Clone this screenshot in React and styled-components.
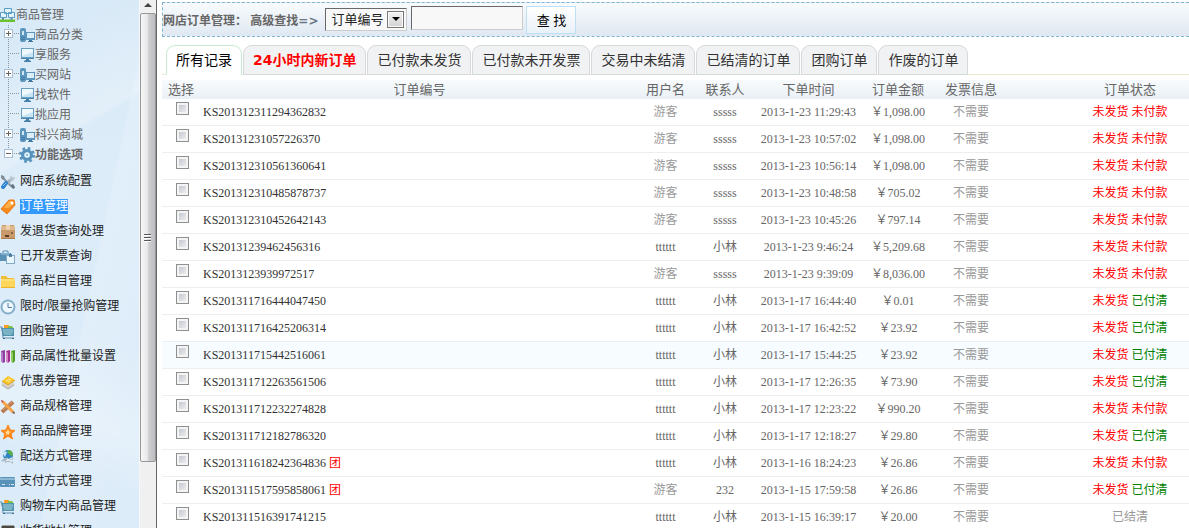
import { useState } from "react";
import styled, { createGlobalStyle } from "styled-components";

const colors = {
  text: "#666",
  dark: "#333",
  muted: "#999",
  red: "#f00",
  green: "#008000",
};

const GlobalStyle = createGlobalStyle`
  * {
    box-sizing: border-box;
  }
  body {
    margin: 0;
    background: #fff;
    color: ${colors.text};
    font-family: "Liberation Sans", "Noto Sans CJK SC", sans-serif;
    font-size: 12px;
  }
`;

const Shell = styled.div`
  display: flex;
  height: 100vh;
  overflow: hidden;
`;

/* ---------- sidebar ---------- */

const Sidebar = styled.aside`
  flex: none;
  width: 139px;
  padding-top: 5px;
  overflow: hidden;
  background:
    linear-gradient(150deg, rgba(255, 255, 255, 0) 10%, rgba(255, 255, 255, 0.22) 28%, rgba(255, 255, 255, 0) 29%),
    linear-gradient(102deg, rgba(255, 255, 255, 0) 60%, rgba(255, 255, 255, 0.16) 61%, rgba(255, 255, 255, 0.04) 90%),
    linear-gradient(20deg, rgba(255, 255, 255, 0) 14%, rgba(255, 255, 255, 0.26) 24%, rgba(255, 255, 255, 0) 40%),
    linear-gradient(#d8e9f7, #dcecf9 30%, #dbebf9);
`;

const TreeRow = styled.div`
  display: flex;
  align-items: center;
  height: 20px;
  line-height: 20px;
  white-space: nowrap;
  font-weight: ${(props) => (props.$bold ? "bold" : "normal")};
  svg {
    flex: none;
  }
`;

const TreeLink = styled.a`
  color: ${colors.text};
  text-decoration: none;
`;

const Menu = styled.ul`
  list-style: none;
  margin: 4px 0 0;
  padding: 0;
`;

const MenuItem = styled.li`
  display: flex;
  align-items: center;
  column-gap: 4px;
  height: 25px;
  white-space: nowrap;
  svg {
    flex: none;
  }
`;

const MenuLink = styled.a`
  line-height: 15px;
  color: ${(props) => (props.$active ? "#fff" : "#222")};
  background: ${(props) => (props.$active ? "#3399ff" : "transparent")};
  text-decoration: none;
`;

const Scrollbar = styled.div`
  flex: none;
  display: flex;
  flex-direction: column;
  width: 18px;
  border-left: 1px solid #f4f8fb;
  border-right: 1px solid #666;
  background: #f0f0f0;
`;

const ScrollUp = styled.button`
  display: flex;
  justify-content: center;
  height: 13px;
  padding: 3px 0 0;
  border: 0;
  background: #f0f0f0;
`;

const ScrollThumb = styled.div`
  display: flex;
  align-items: center;
  justify-content: center;
  height: 85%;
  border: 1px solid #979797;
  border-radius: 2px;
  background: linear-gradient(90deg, #f6f6f6, #e9e9eb 45%, #cfcfd2 55%, #bdbdc1);
`;

/* ---------- main ---------- */

const Main = styled.main`
  flex: 1;
  min-width: 0;
  padding: 2px 0 0 5px;
`;

const SearchBar = styled.form`
  display: flex;
  align-items: flex-start;
  height: 35px;
  padding-top: 3px;
  border: 1px dashed #7db5cd;
  border-right: 0;
  background: linear-gradient(#f8fbfd, #dfe8f2);
  white-space: nowrap;
`;

const SearchTitle = styled.label`
  margin-right: 7px;
  font-weight: bold;
  line-height: 30px;
`;

const Arrow = styled.span`
  font-family: "DejaVu Sans", sans-serif;
  color: #6b7886;
`;

const SelectBox = styled.span`
  position: relative;
  margin: 2px 4px 0 0;
`;

const Select = styled.select`
  appearance: none;
  display: block;
  width: 82px;
  height: 23px;
  padding: 0 0 0 5px;
  border: 1px solid #696969;
  border-right-color: #ccc;
  border-bottom-color: #ccc;
  border-radius: 0;
  background: #f8f8f8;
  color: #222;
  font: 13px "Liberation Sans", "Noto Sans CJK SC", sans-serif;
`;

const SelectArrow = styled.span`
  position: absolute;
  top: 3px;
  right: 3px;
  display: flex;
  align-items: center;
  justify-content: center;
  width: 17px;
  height: 17px;
  border: 1px solid #777;
  background: linear-gradient(#f2f2f2, #d2d2d2);
  box-shadow: inset 0 0 0 1px #fafafa;
  pointer-events: none;
`;

const SearchInput = styled.input`
  width: 112px;
  height: 24px;
  margin-right: 3px;
  border: 1px solid #696969;
  border-right-color: #ccc;
  border-bottom-color: #ccc;
  background: #f8f8f8;
`;

const SearchButton = styled.button`
  width: 50px;
  height: 28px;
  padding: 0 0 2px;
  border: 1px solid #bfdff5;
  background: linear-gradient(#fff, #e9f1f9);
  color: #000;
  font: 13px "Liberation Sans", "Noto Sans CJK SC", sans-serif;
`;

const Tabs = styled.nav`
  display: flex;
  column-gap: 1px;
  margin-top: 8px;
  padding-left: 4px;
  border-bottom: 1px solid #ece8d2;
`;

const Tab = styled.button`
  height: 30px;
  margin-bottom: -1px;
  padding: 0 9px;
  border: 1px solid ${(props) => (props.$active ? "#c5ecd2" : "#d5dad8")};
  border-bottom-color: ${(props) => (props.$active ? "#fff" : "#d5dad8")};
  border-radius: 9px 9px 0 0;
  background: ${(props) => (props.$active ? "#fff" : "#f1f2f4")};
  color: ${(props) => (props.$hot ? colors.red : props.$active ? "#000" : "#333")};
  font-family: "DejaVu Sans", "Noto Sans CJK SC", sans-serif;
  font-size: 14px;
  font-weight: ${(props) => (props.$hot ? "bold" : "normal")};
  line-height: 28px;
  white-space: nowrap;
`;

const Table = styled.table`
  width: 100%;
  margin-top: 5px;
  border-collapse: separate;
  border-spacing: 0;
  table-layout: fixed;
  font-family: "Liberation Serif", "Noto Sans CJK SC", serif;
`;

const Th = styled.th`
  width: ${(props) => props.$width || "auto"};
  height: 19px;
  padding: 0 0 0 ${(props) => props.$indent || "0"};
  background: linear-gradient(#f8fbfd, #e9f0f6);
  font-size: 13px;
  font-weight: normal;
  line-height: 19px;
  white-space: nowrap;
`;

const Row = styled.tr`
  background: ${(props) => (props.$hover ? "#f6fcff" : "#fff")};
`;

const Td = styled.td`
  height: 27px;
  padding: 0 0 0 ${(props) => props.$indent || "0"};
  border-bottom: 1px solid #eee;
  color: ${(props) => props.$color || colors.text};
  line-height: 26px;
  text-align: ${(props) => props.$align || "center"};
  white-space: nowrap;
`;

const Check = styled.input`
  appearance: none;
  display: block;
  width: 13px;
  height: 13px;
  margin: 0 auto 7px 14px;
  border: 1px solid #8e8f8f;
  background: linear-gradient(135deg, #b9bfc9, #f6f6f6);
  box-shadow: inset 0 0 0 2px #f4f4f4;
  &:checked {
    background: #4b6fa5;
  }
`;

const Mark = styled.span`
  color: ${(props) => props.$color};
`;

/* ---------- icons ---------- */

function Icon({ children }) {
  return (
    <svg width="16" height="16" viewBox="0 0 16 16" fill="none" aria-hidden="true">
      {children}
    </svg>
  );
}

const RootIcon = () => (
  <Icon>
    <path d="M4.500 1.500h7v5h-7zM.500 5.500h6v5h-6zM8.500 5.500h6v5h-6z" fill="#e2f3fc" stroke="#5a9cc4" />
    <path d="M3 11v2M11.500 11v2" stroke="#4f8db5" strokeWidth="2" />
    <path d="M0 13l1-1 1 1 1-1 2 1 1-1 2 1 1-1 2 1 1-1 1 1 2-1v3H0z" fill="#6cc12f" />
  </Icon>
);

const MonitorIcon = () => (
  <Icon>
    <path d="M2 1h13v10H2z" fill="#6a9fc3" />
    <path d="M3 2h11v8H3z" fill="#c9e4f3" />
    <path d="M3 2h11v3L3 9z" fill="#eef8fd" />
    <path d="M2 11h13v1H2z" fill="#4d88b0" />
    <path d="M7 12h3v1l2 1v1H5v-1l2-1z" fill="#4480aa" />
  </Icon>
);

const DeviceIcon = () => (
  <Icon>
    <rect x="1" y="1" width="6" height="14" rx="2" fill="#5c95bd" />
    <path d="M3 4h2v4H3z" fill="#cfe6f4" />
    <path d="M2 10h4v1H2zM2 12h4v1H2z" fill="#3f7ba6" />
    <path d="M7 5h9v8H7z" fill="#5c95bd" />
    <path d="M8 6h7v5H8z" fill="#d9eef9" />
    <path d="M10 13h3v1h1v1H9v-1h1z" fill="#3f79a3" />
  </Icon>
);

const GearIcon = () => (
  <Icon>
    <circle cx="8" cy="8" r="6.500" stroke="#5793bd" strokeWidth="3" strokeDasharray="2.550 2.550" />
    <circle cx="8" cy="8" r="4.500" fill="#a8cde5" stroke="#5793bd" strokeWidth="3" />
    <circle cx="8" cy="8" r="2.500" fill="#eaf5fc" />
    <circle cx="8" cy="8" r="1" fill="#6ba4ca" />
  </Icon>
);

const ToolsIcon = () => (
  <Icon>
    <path d="M3 4l9 9" stroke="#8896a3" strokeWidth="2" />
    <path d="M1 1l3 1 1 3-2 1-2-2z" fill="#7e8d99" />
    <path d="M11 11l2-1 2 3-1 2-2-1z" fill="#5f7281" />
    <path d="M13 4L7 9" stroke="#a4b2bd" strokeWidth="3" />
    <path d="M10 3l2-2-.500 3L15 3l-1 3-4 1z" fill="#bac7d0" />
    <path d="M6 9l-3 4" stroke="#2c82cf" strokeWidth="4" strokeLinecap="round" />
    <path d="M6 9l-3 3" stroke="#8cc9f5" />
  </Icon>
);

const TagIcon = () => (
  <Icon>
    <path d="M9 1l5 0 1 5-8 9-6-5z" fill="#f68a1e" stroke="#ee7d18" />
    <path d="M9 2l4 0 1 3-5 4-5 0z" fill="#ffae48" />
    <circle cx="12" cy="4" r="1.500" fill="#fff" />
  </Icon>
);

const BoxIcon = () => (
  <Icon>
    <path d="M2 1h12l1 5v9H1V6z" fill="#c99a6c" />
    <path d="M2 2h12l1 4H1z" fill="#dfb88c" />
    <path d="M6 1h4v5H6z" fill="#ecd3ae" />
    <path d="M5 12h4" stroke="#5d3c20" strokeWidth="2" />
    <path d="M11 8h2v2h-2z" fill="#8a6242" />
    <path d="M1 14.500h14" stroke="#a87c50" />
  </Icon>
);

const InvoiceIcon = () => (
  <Icon>
    <path d="M0 4h11v8H0z" fill="#5a90b6" />
    <path d="M1 4h9v2H1z" fill="#7fb0cf" />
    <path d="M3 4V2h5v2" stroke="#5b8fb3" />
    <path d="M6 6h9v9H6z" fill="#7fabc8" />
    <path d="M7 7h7v7H7z" fill="#eaf6fc" />
    <path d="M9 5h3v3H9z" fill="#4b7fa5" />
  </Icon>
);

const FolderIcon = () => (
  <Icon>
    <path d="M1 2h5l2 2h6v3H1z" fill="#f0bd3a" />
    <path d="M1 5h13l1 1v8H1z" fill="#fdd65a" />
    <path d="M1 6h13" stroke="#ffe891" />
    <path d="M1 13.500h14" stroke="#eeb32c" />
  </Icon>
);

const ClockIcon = () => (
  <Icon>
    <circle cx="8" cy="8" r="6.500" fill="#eef8fd" stroke="#86b0ca" strokeWidth="2" />
    <path d="M8 4v4.500h4" stroke="#55809f" />
  </Icon>
);

const CartIcon = () => (
  <Icon>
    <path d="M4 1h5v4H4z" fill="#ff9c21" />
    <path d="M8 2h4l2 3H8z" fill="#7fc241" />
    <path d="M1 4h13v8H3z" fill="#4f94ab" />
    <path d="M3 6h10M3 8h10M4 10h8" stroke="#a5d2df" />
    <path d="M0 3h2l1 11h11" stroke="#5a8fae" />
    <path d="M3 14h2v1H3zM12 14h2v1h-2z" fill="#3d6782" />
  </Icon>
);

const BindersIcon = () => (
  <Icon>
    <path d="M1 2l4-1v12l-2 1-2-2z" fill="#8e3fa4" />
    <path d="M1 2l2 2v10l-2-2z" fill="#b57cc6" />
    <path d="M6 2l4-1v11l-2 2-2-2z" fill="#a62a90" />
    <path d="M6 2l2 2v10l-2-2z" fill="#d787c4" />
    <path d="M11 2l4-1v11l-2 2-2-2z" fill="#4d9d27" />
    <path d="M11 2l2 2v10l-2-2z" fill="#94cc62" />
  </Icon>
);

const CouponIcon = () => (
  <Icon>
    <path d="M2 7v4l6 4 6-4V7l-6 4z" fill="#d4d2ca" />
    <path d="M2 11l6 4 6-4" stroke="#a9a69c" />
    <path d="M2 7l6-5 7 4-7 5z" fill="#f9c72c" />
    <path d="M2 7l6 4 7-5" stroke="#dd9f18" />
    <path d="M6 6l4 2M8 5l3 1" stroke="#fff0a8" />
  </Icon>
);

const RulerIcon = () => (
  <Icon>
    <path d="M2 13L13 3" stroke="#b9794e" strokeWidth="4" />
    <path d="M3 11L12 3" stroke="#d3a077" />
    <path d="M3 3l10 10" stroke="#f3a343" strokeWidth="3" />
    <path d="M1 1l3 1-2 2z" fill="#c6403b" />
    <path d="M12 14l3 1-1-3z" fill="#6b4a34" />
  </Icon>
);

const StarIcon = () => (
  <Icon>
    <path d="M8 1l2 5 5 .500-4 3.500 1.500 5L8 12l-4.500 3L5 10 1 6.500 6 6z" fill="#ff8c14" stroke="#f98015" />
    <path d="M8 5l1 2.500 2 .500-2 1v2L8 10l-2 1 .500-2L5 8l2-.500z" fill="#ffe0a0" />
  </Icon>
);

const GlobeIcon = () => (
  <Icon>
    <circle cx="8" cy="6" r="5" fill="#2f86c2" />
    <path d="M8 1c4 0 5 3 5 5-2 2-2 0-4-1s-2-2-1-4z" fill="#5fb04b" />
    <path d="M3 5c0-2 2-3 4-2L5 8z" fill="#cdeaf8" />
    <path d="M5 13l8-4M6 9l7 5M2 12l4-2" stroke="#a9bbc6" strokeWidth="2" />
    <path d="M6 12l6-3M7 10l5 3" stroke="#f0f5f8" />
  </Icon>
);

const CardIcon = () => (
  <Icon>
    <rect x="0" y="3" width="15" height="10" rx="1" fill="#5892b8" />
    <path d="M0 4h15v2H0z" fill="#8db9d4" />
    <path d="M2 10.500h3M9 10.500h1M11 10.500h3" stroke="#d3e8f4" />
  </Icon>
);

const AddressIcon = () => (
  <Icon>
    <path d="M2 2h12v12H2z" fill="#d99a4e" stroke="#5c5246" />
    <path d="M2 2h12v3H2z" fill="#4b4741" />
    <path d="M4 8h8M4 11h6" stroke="#fff1d8" />
  </Icon>
);

// dotted connector in front of a tree node, with an optional +/- box
function Branch({ toggle, last }) {
  return (
    <svg width="19" height="20" viewBox="0 0 19 20" fill="none" aria-hidden="true">
      <path d={last ? "M8.500 0v8" : "M8.500 0v20"} stroke="#8e969b" strokeDasharray="1 1" />
      <path d="M10 8.500h9" stroke="#8e969b" strokeDasharray="1 1" />
      {toggle && (
        <>
          <rect x="4.500" y="4.500" width="8" height="8" fill="#fff" stroke="#a9bfd6" />
          <path d={toggle === "plus" ? "M6 8.500h5M8.500 6v5" : "M6 8.500h5"} stroke="#666" />
        </>
      )}
    </svg>
  );
}

/* ---------- data ---------- */

const tree = [
  { label: "商品分类", icon: DeviceIcon, toggle: "plus" },
  { label: "享服务", icon: MonitorIcon },
  { label: "买网站", icon: DeviceIcon, toggle: "plus" },
  { label: "找软件", icon: MonitorIcon },
  { label: "挑应用", icon: MonitorIcon },
  { label: "科兴商城", icon: DeviceIcon, toggle: "plus" },
  { label: "功能选项", icon: GearIcon, toggle: "minus", bold: true },
];

const menu = [
  ["网店系统配置", ToolsIcon],
  ["订单管理", TagIcon],
  ["发退货查询处理", BoxIcon],
  ["已开发票查询", InvoiceIcon],
  ["商品栏目管理", FolderIcon],
  ["限时/限量抢购管理", ClockIcon],
  ["团购管理", CartIcon],
  ["商品属性批量设置", BindersIcon],
  ["优惠券管理", CouponIcon],
  ["商品规格管理", RulerIcon],
  ["商品品牌管理", StarIcon],
  ["配送方式管理", GlobeIcon],
  ["支付方式管理", CardIcon],
  ["购物车内商品管理", CartIcon],
  ["收货地址管理", AddressIcon],
];

const tabs = [
  "所有记录",
  "24小时内新订单",
  "已付款未发货",
  "已付款未开发票",
  "交易中未结清",
  "已结清的订单",
  "团购订单",
  "作废的订单",
];

// [order no, user, contact, time, amount, payment state, group buy]
const orders = [
  ["KS201312311294362832", "游客", "sssss", "2013-1-23 11:29:43", "1,098.00", "未付款"],
  ["KS20131231057226370", "游客", "sssss", "2013-1-23 10:57:02", "1,098.00", "未付款"],
  ["KS201312310561360641", "游客", "sssss", "2013-1-23 10:56:14", "1,098.00", "未付款"],
  ["KS201312310485878737", "游客", "sssss", "2013-1-23 10:48:58", "705.02", "未付款"],
  ["KS201312310452642143", "游客", "sssss", "2013-1-23 10:45:26", "797.14", "未付款"],
  ["KS20131239462456316", "tttttt", "小林", "2013-1-23 9:46:24", "5,209.68", "未付款"],
  ["KS2013123939972517", "游客", "sssss", "2013-1-23 9:39:09", "8,036.00", "未付款"],
  ["KS201311716444047450", "tttttt", "小林", "2013-1-17 16:44:40", "0.01", "已付清"],
  ["KS201311716425206314", "tttttt", "小林", "2013-1-17 16:42:52", "23.92", "已付清"],
  ["KS201311715442516061", "tttttt", "小林", "2013-1-17 15:44:25", "23.92", "已付清"],
  ["KS201311712263561506", "tttttt", "小林", "2013-1-17 12:26:35", "73.90", "已付清"],
  ["KS201311712232274828", "tttttt", "小林", "2013-1-17 12:23:22", "990.20", "未付款"],
  ["KS201311712182786320", "tttttt", "小林", "2013-1-17 12:18:27", "29.80", "已付清"],
  ["KS201311618242364836", "tttttt", "小林", "2013-1-16 18:24:23", "26.86", "未付款", true],
  ["KS201311517595858061", "游客", "232", "2013-1-15 17:59:58", "26.86", "已付清", true],
  ["KS201311516391741215", "tttttt", "小林", "2013-1-15 16:39:17", "20.00", "已结清"],
];

function Status({ pay }) {
  if (pay === "已结清") return <Mark $color={colors.muted}>已结清</Mark>;
  return (
    <>
      <Mark $color={colors.red}>未发货</Mark>{" "}
      <Mark $color={pay === "已付清" ? colors.green : colors.red}>{pay}</Mark>
    </>
  );
}

export default function App() {
  const [tab, setTab] = useState(0);
  const [current, setCurrent] = useState("订单管理");

  return (
    <>
      <GlobalStyle />
      <Shell>
        <Sidebar>
          <TreeRow>
            <RootIcon />
            <TreeLink href="#">商品管理</TreeLink>
          </TreeRow>
          {tree.map(({ label, icon: NodeIcon, toggle, bold }, i) => (
            <TreeRow key={label} $bold={bold}>
              <Branch toggle={toggle} last={i === tree.length - 1} />
              <NodeIcon />
              <TreeLink href="#">{label}</TreeLink>
            </TreeRow>
          ))}
          <Menu>
            {menu.map(([label, ItemIcon]) => (
              <MenuItem key={label}>
                <ItemIcon />
                <MenuLink href="#" $active={label === current} onClick={() => setCurrent(label)}>
                  {label}
                </MenuLink>
              </MenuItem>
            ))}
          </Menu>
        </Sidebar>

        <Scrollbar>
          <ScrollUp type="button" aria-label="向上滚动">
            <svg width="8" height="5" viewBox="0 0 8 5">
              <path d="M4 0l4 4H0z" fill="#444" />
            </svg>
          </ScrollUp>
          <ScrollThumb>
            <svg width="8" height="9" viewBox="0 0 8 9">
              <path d="M0 1.500h7M0 4.500h7M0 7.500h7" stroke="#555" />
              <path d="M0 2.500h7M0 5.500h7M0 8.500h7" stroke="#fff" />
            </svg>
          </ScrollThumb>
        </Scrollbar>

        <Main>
          <SearchBar onSubmit={(e) => e.preventDefault()}>
            <SearchTitle htmlFor="field">
              网店订单管理： 高级查找<Arrow>=&gt;</Arrow>
            </SearchTitle>
            <SelectBox>
              <Select id="field">
                <option>订单编号</option>
                <option>用户名</option>
                <option>联系人</option>
              </Select>
              <SelectArrow>
                <svg width="8" height="5" viewBox="0 0 8 5">
                  <path d="M0 0h8L4 4z" fill="#000" />
                </svg>
              </SelectArrow>
            </SelectBox>
            <SearchInput type="text" aria-label="关键字" />
            <SearchButton type="submit">查 找</SearchButton>
          </SearchBar>

          <Tabs>
            {tabs.map((label, i) => (
              <Tab key={label} type="button" $active={i === tab} $hot={i === 1} onClick={() => setTab(i)}>
                {label}
              </Tab>
            ))}
          </Tabs>

          <Table>
            <thead>
              <tr>
                <Th $width="38px">选择</Th>
                <Th>订单编号</Th>
                <Th $width="53px">用户名</Th>
                <Th $width="66px">联系人</Th>
                <Th $width="101px">下单时间</Th>
                <Th $width="78px">订单金额</Th>
                <Th $width="68px">发票信息</Th>
                <Th $width="184px" $indent="66px">
                  订单状态
                </Th>
              </tr>
            </thead>
            <tbody>
              {orders.map(([no, user, contact, time, amount, pay, group], i) => (
                <Row key={no} $hover={i === 9}>
                  <Td>
                    <Check type="checkbox" aria-label={no} />
                  </Td>
                  <Td $align="left" $indent="3px" $color={colors.dark}>
                    {no} {group && <Mark $color={colors.red}>团</Mark>}
                  </Td>
                  <Td $color={user === "游客" ? colors.muted : colors.text}>{user}</Td>
                  <Td>{contact}</Td>
                  <Td>{time}</Td>
                  <Td>￥{amount}</Td>
                  <Td $color={colors.muted}>不需要</Td>
                  <Td $indent="66px">
                    <Status pay={pay} />
                  </Td>
                </Row>
              ))}
            </tbody>
          </Table>
        </Main>
      </Shell>
    </>
  );
}
